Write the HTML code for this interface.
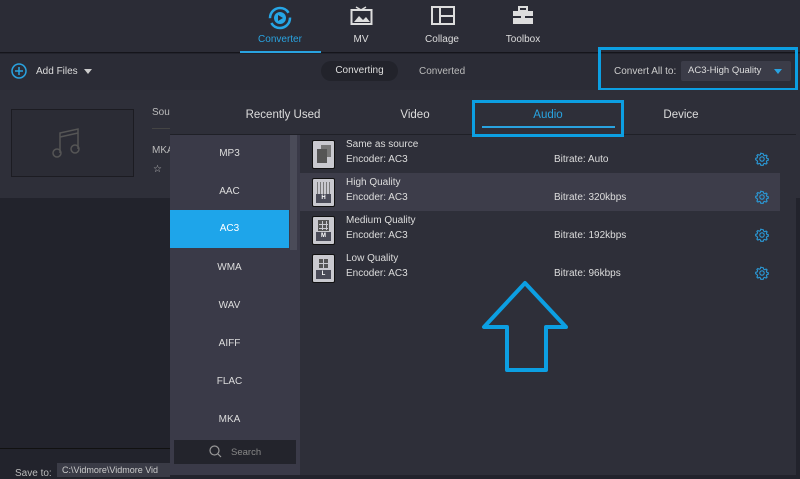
<!DOCTYPE html>
<html><head><style>
*{margin:0;padding:0;box-sizing:border-box}
body{width:800px;height:475px;overflow:hidden;background:#22232c;font-family:"Liberation Sans",sans-serif;color:#ddd;position:relative}
.a{position:absolute}
.t{font-size:10px;color:#ddd}
.tab{position:absolute;top:0;width:80px;text-align:center;font-size:10px;color:#ddd}
.li{position:absolute;left:170px;width:119px;height:38px;line-height:38px;text-align:center;font-size:10px;color:#ddd}
.row{position:absolute;left:300px;width:480px;height:38px}
.row .ic{position:absolute;left:12px;top:5px;width:23px;height:29px;background:#c9c9cf;border:1px solid #111;border-radius:2px}
.row .n{position:absolute;left:46px;top:4px;font-size:10px;color:#ddd}
.row .e{position:absolute;left:46px;top:19px;font-size:10px;color:#ddd}
.row .b{position:absolute;left:254px;top:19px;font-size:10px;color:#ddd}
.row svg.g{position:absolute;left:455px;top:17px}
.lab{position:absolute;left:3px;bottom:3px;width:15px;height:9px;background:#4a4b58;color:#fff;font-size:6px;text-align:center;line-height:9px;font-weight:bold}
</style></head><body>
<div class="a" style="left:0;top:0;width:800px;height:53px;background:#2b2c36;border-bottom:1px solid #15151b"></div>
<svg class="a" style="left:267px;top:5px" width="26" height="26" viewBox="0 0 26 26"><circle cx="13" cy="13" r="10" fill="none" stroke="#26a6e6" stroke-width="2.5" stroke-dasharray="26 5"/><circle cx="13" cy="13" r="6" fill="#26a6e6"/><path d="M11 10l5 3-5 3z" fill="#2b2c36"/></svg>
<div class="tab" style="left:240px;top:34px;color:#29a3e0">Converter</div>
<div class="a" style="left:240px;top:51px;width:81px;height:2px;background:#29a3e0"></div>
<svg class="a" style="left:350px;top:6px" width="23" height="20"><rect x="1.5" y="4" width="20" height="14" fill="none" stroke="#ddd" stroke-width="2"/><path d="M6 1l5 3 5-3" stroke="#ddd" fill="none" stroke-width="1.5"/><path d="M4 16l5-6 4 4 3-3 4 5z" fill="#ddd"/></svg>
<div class="tab" style="left:321px;top:34px">MV</div>
<svg class="a" style="left:431px;top:6px" width="24" height="20"><rect x="1" y="1" width="22" height="17" fill="none" stroke="#ddd" stroke-width="2"/><path d="M9 1v17M9 10h14" stroke="#ddd" stroke-width="2"/></svg>
<div class="tab" style="left:402px;top:34px">Collage</div>
<svg class="a" style="left:512px;top:6px" width="22" height="20"><rect x="7" y="1" width="8" height="4" fill="none" stroke="#ddd" stroke-width="2"/><rect x="1" y="5" width="20" height="13" fill="#ddd"/><rect x="1" y="10" width="20" height="2" fill="#2b2c36"/><rect x="9" y="9" width="4" height="4" fill="#ddd"/></svg>
<div class="tab" style="left:483px;top:34px">Toolbox</div>

<div class="a" style="left:0;top:54px;width:800px;height:36px;background:#2b2c36"></div>
<svg class="a" style="left:11px;top:63px" width="16" height="16"><circle cx="8" cy="8" r="7" fill="none" stroke="#29a3e0" stroke-width="1.5"/><path d="M8 4v8M4 8h8" stroke="#29a3e0" stroke-width="1.5"/></svg>
<div class="a t" style="left:36px;top:66px">Add Files</div>
<div class="a" style="left:84px;top:69px;border:4px solid transparent;border-top:5px solid #ccc"></div>
<div class="a" style="left:321px;top:61px;width:77px;height:20px;border-radius:10px;background:#22232b;font-size:10px;line-height:20px;text-align:center">Converting</div>
<div class="a t" style="left:419px;top:66px;color:#bbb">Converted</div>
<div class="a t" style="left:614px;top:66px;color:#ccc">Convert All to:</div>
<div class="a" style="left:681px;top:61px;width:110px;height:20px;background:#3b3c48;border-radius:2px;font-size:9.5px;line-height:20px;padding-left:7px;color:#ddd">AC3-High Quality</div>
<div class="a" style="left:774px;top:69px;border:4px solid transparent;border-top:5px solid #29a3e0"></div>
<div class="a" style="left:598px;top:47px;width:200px;height:44px;border:3px solid #0c9fe2"></div>

<div class="a" style="left:0;top:90px;width:800px;height:108px;background:#2e2f39"></div>
<div class="a" style="left:11px;top:109px;width:123px;height:68px;border:1px solid #1c1c22;background:#2b2c35"></div>
<svg class="a" style="left:50px;top:125px" width="36" height="36"><path d="M10 28V8l18-4v20" fill="none" stroke="#555" stroke-width="1.5"/><circle cx="7" cy="28" r="4" fill="none" stroke="#555" stroke-width="1.5"/><circle cx="25" cy="24" r="4" fill="none" stroke="#555" stroke-width="1.5"/><path d="M10 12l18-4" stroke="#555" stroke-width="1.5"/></svg>
<div class="a t" style="left:152px;top:107px;color:#bbb">Sou</div>
<div class="a" style="left:152px;top:128px;width:18px;height:1px;background:#444"></div>
<div class="a t" style="left:152px;top:145px;color:#bbb">MKA</div>
<div class="a t" style="left:153px;top:164px;color:#bbb">☆</div>
<div class="a" style="left:0;top:448px;width:170px;height:1px;background:#111"></div>
<div class="a t" style="left:15px;top:468px;color:#bbb">Save to:</div>
<div class="a" style="left:57px;top:463px;width:113px;height:14px;background:#3a3b46;font-size:9px;color:#ccc;padding:2px 5px">C:\Vidmore\Vidmore Vid</div>

<div class="a" style="left:170px;top:93px;width:626px;height:382px;background:#2e2f39"></div>
<div class="a" style="left:170px;top:134px;width:626px;height:1px;background:#1f2027"></div>
<div class="a" style="left:170px;top:109px;width:226px;text-align:center;font-size:11.5px;color:#ddd">Recently Used</div>
<div class="a" style="left:370px;top:109px;width:90px;text-align:center;font-size:11.5px;color:#ddd">Video</div>
<div class="a" style="left:480px;top:109px;width:136px;text-align:center;font-size:11.5px;color:#29a3e0">Audio</div>
<div class="a" style="left:482px;top:126px;width:133px;height:2px;background:#29a3e0"></div>
<div class="a" style="left:472px;top:100px;width:152px;height:37px;border:3px solid #0c9fe2"></div>
<div class="a" style="left:620px;top:109px;width:122px;text-align:center;font-size:11.5px;color:#ddd">Device</div>

<div class="a" style="left:170px;top:135px;width:130px;height:340px;background:#3a3a48"></div>
<div class="a" style="left:290px;top:135px;width:7px;height:115px;background:#4a4b58"></div>
<div class="li" style="top:135px">MP3</div>
<div class="li" style="top:173px">AAC</div>
<div class="li" style="top:210px;background:#1ea5ea;color:#fff">AC3</div>
<div class="li" style="top:249px">WMA</div>
<div class="li" style="top:287px">WAV</div>
<div class="li" style="top:325px">AIFF</div>
<div class="li" style="top:363px">FLAC</div>
<div class="li" style="top:401px">MKA</div>
<div class="a" style="left:174px;top:440px;width:122px;height:24px;background:#23242c"></div>
<svg class="a" style="left:209px;top:445px" width="13" height="13"><circle cx="5.5" cy="5.5" r="4.5" fill="none" stroke="#999" stroke-width="1.2"/><path d="M9 9l3 3" stroke="#999" stroke-width="1.2"/></svg>
<div class="a" style="left:231px;top:447px;font-size:9.5px;color:#888">Search</div>

<svg width="0" height="0" style="position:absolute"><defs><g id="gear"><path d="M7 1.5l1.2.2.4 1.4 1.2.6 1.3-.7 1 .9-.7 1.3.5 1.2 1.4.4v1.4l-1.4.4-.5 1.2.7 1.3-1 1-1.3-.7-1.2.5-.4 1.4H5.8l-.4-1.4-1.2-.5-1.3.7-1-1 .7-1.3-.5-1.2L.7 7.7V6.3l1.4-.4.5-1.2-.7-1.3 1-.9 1.3.7 1.2-.6.4-1.4z" fill="none" stroke="#2a9ad8" stroke-width="1.1"/><circle cx="7" cy="7" r="2.2" fill="none" stroke="#2a9ad8" stroke-width="1.1"/></g></defs></svg>

<div class="row" style="top:135px"><div class="ic"><div style="position:absolute;left:8px;top:4px;width:10px;height:12px;background:#777"></div><div style="position:absolute;left:4px;top:8px;width:10px;height:14px;background:#555"></div></div><div class="n">Same as source</div><div class="e">Encoder: AC3</div><div class="b">Bitrate: Auto</div><svg class="g" width="14" height="14"><use href="#gear"/></svg></div>
<div class="row" style="top:173px;background:#3d3d4a"><div class="ic"><div style="position:absolute;left:4px;top:3px;width:14px;height:12px;background:repeating-linear-gradient(90deg,#666 0 1px,transparent 1px 3px),#c9c9cf;opacity:.8"></div><div class="lab">H</div></div><div class="n">High Quality</div><div class="e">Encoder: AC3</div><div class="b">Bitrate: 320kbps</div><svg class="g" width="14" height="14"><use href="#gear"/></svg></div>
<div class="row" style="top:211px"><div class="ic"><div style="position:absolute;left:5px;top:3px;width:11px;height:11px;background:#555;border:1px solid #555;background-image:linear-gradient(90deg,transparent 3px,#c9c9cf 3px 4px,transparent 4px 7px,#c9c9cf 7px 8px,transparent 8px),linear-gradient(transparent 3px,#c9c9cf 3px 4px,transparent 4px 7px,#c9c9cf 7px 8px,transparent 8px)"></div><div class="lab">M</div></div><div class="n">Medium Quality</div><div class="e">Encoder: AC3</div><div class="b">Bitrate: 192kbps</div><svg class="g" width="14" height="14"><use href="#gear"/></svg></div>
<div class="row" style="top:249px"><div class="ic"><div style="position:absolute;left:6px;top:4px;width:9px;height:9px;background:#555;background-image:linear-gradient(90deg,transparent 4px,#c9c9cf 4px 5px,transparent 5px),linear-gradient(transparent 4px,#c9c9cf 4px 5px,transparent 5px)"></div><div class="lab">L</div></div><div class="n">Low Quality</div><div class="e">Encoder: AC3</div><div class="b">Bitrate: 96kbps</div><svg class="g" width="14" height="14"><use href="#gear"/></svg></div>

<svg class="a" style="left:0;top:0" width="800" height="475"><path d="M525 283L484 327H507V370H546V327H566Z" fill="none" stroke="#0c9fe2" stroke-width="4" stroke-linejoin="round"/></svg>
</body></html>
